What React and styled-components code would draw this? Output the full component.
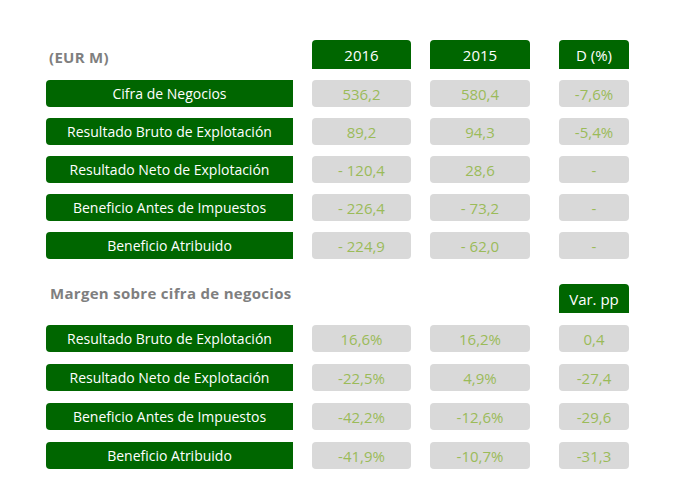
import React from "react";
import styled, { createGlobalStyle } from "styled-components";

const Global = createGlobalStyle`
  html, body { margin: 0; padding: 0; background: #ffffff; }
  body { font-family: "Open Sans", "DejaVu Sans", sans-serif; }
`;

const Page = styled.div`
  width: 691px;
  height: 495px;
  box-sizing: border-box;
  padding: 40px 0 0 46px;
  display: flex;
  flex-direction: column;
  gap: 25px;
`;

const Section = styled.div`
  display: grid;
  grid-template-columns: 247px 99px 100px 80px;
  column-gap: 19px;
  row-gap: ${(p) => p.$gap}px;
  grid-auto-rows: 27px;
  grid-template-rows: 29px;
`;

const Title = styled.div`
  color: #7f7f7f;
  font-weight: bold;
  font-size: 15px;
  line-height: 18px;
  padding-left: ${(p) => p.$pad}px;
  align-self: ${(p) => (p.$top ? "start" : "center")};
  margin-top: ${(p) => (p.$top ? 0 : 4)}px;
  white-space: nowrap;
  letter-spacing: 0.3px;
`;

const Head = styled.div`
  grid-column: ${(p) => p.$col};
  justify-self: end;
  width: ${(p) => p.$w}px;
  background: #006600;
  color: #ffffff;
  font-size: 15px;
  border-radius: 4px 4px 0 0;
  display: flex;
  align-items: center;
  justify-content: center;
`;

const Label = styled.div`
  background: #006600;
  color: #ffffff;
  font-size: 14px;
  border-radius: 4px 0 0 4px;
  display: flex;
  align-items: center;
  justify-content: center;
  white-space: nowrap;
`;

const Cell = styled.div`
  justify-self: end;
  width: ${(p) => p.$w}px;
  background: #d9d9d9;
  color: #9bbb59;
  font-size: 15px;
  border-radius: 4px;
  display: flex;
  align-items: center;
  justify-content: center;
  white-space: nowrap;
`;

const top = [
  ["Cifra de Negocios", "536,2", "580,4", "-7,6%"],
  ["Resultado Bruto de Explotación", "89,2", "94,3", "-5,4%"],
  ["Resultado Neto de Explotación", "- 120,4", "28,6", "-"],
  ["Beneficio Antes de Impuestos", "- 226,4", "- 73,2", "-"],
  ["Beneficio Atribuido", "- 224,9", "- 62,0", "-"],
];

const bottom = [
  ["Resultado Bruto de Explotación", "16,6%", "16,2%", "0,4"],
  ["Resultado Neto de Explotación", "-22,5%", "4,9%", "-27,4"],
  ["Beneficio Antes de Impuestos", "-42,2%", "-12,6%", "-29,6"],
  ["Beneficio Atribuido", "-41,9%", "-10,7%", "-31,3"],
];

const Rows = ({ data }) =>
  data.map((r) => (
    <React.Fragment key={r[0] + r[1]}>
      <Label>{r[0]}</Label>
      <Cell $w={99}>{r[1]}</Cell>
      <Cell $w={100}>{r[2]}</Cell>
      <Cell $w={70}>{r[3]}</Cell>
    </React.Fragment>
  ));

export default function App() {
  return (
    <>
      <Global />
      <Page>
        <Section $gap={11}>
          <Title $pad={3}>(EUR M)</Title>
          <Head $col={2} $w={99}>2016</Head>
          <Head $col={3} $w={100}>2015</Head>
          <Head $col={4} $w={70}>D (%)</Head>
          <Rows data={top} />
        </Section>
        <Section $gap={12}>
          <Title $pad={4} $top>Margen sobre cifra de negocios</Title>
          <Head $col={4} $w={70}>Var. pp</Head>
          <Rows data={bottom} />
        </Section>
      </Page>
    </>
  );
}
